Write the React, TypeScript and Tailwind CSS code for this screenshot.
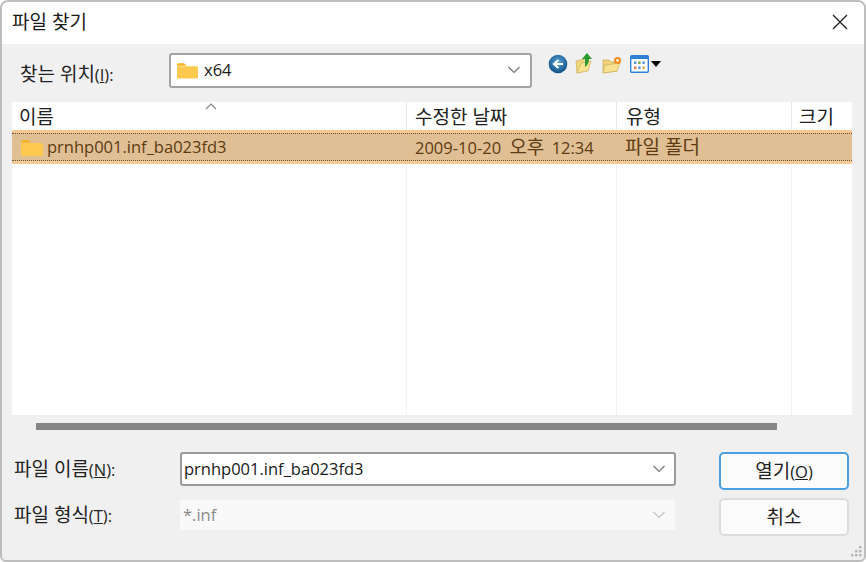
import type { ReactNode } from 'react';

const font = { fontFamily: '"Open Sans", "Noto Sans CJK KR", sans-serif' };

// Korean text runs wider than the latin around it
function K({ children }: { children: ReactNode }) {
  return <span className="text-[19px]">{children}</span>;
}

function Folder({ className }: { className?: string }) {
  return (
    <svg viewBox="0 0 22 17" className={className}>
      <path d="M0 2.5 Q0 1 1.5 1 H7.5 L10 3.5 H0 Z" fill="#f5b221" />
      <path d="M0 4 H20.5 Q22 4 22 5.5 V15.5 Q22 17 20.5 17 H1.5 Q0 17 0 15.5 Z" fill="#fdc94f" />
    </svg>
  );
}

function Chevron({ color = '#777' }: { color?: string }) {
  return (
    <svg width="14" height="8" viewBox="0 0 14 8" fill="none" stroke={color} strokeWidth="1.2">
      <path d="M1.5 1 L7 6.5 L12.5 1" />
    </svg>
  );
}

function Toolbar() {
  return (
    <div className="flex items-center ml-[16px] mt-[-18px] h-[24px]">
      {/* back */}
      <svg width="20" height="20" viewBox="0 0 20 20">
        <defs>
          <radialGradient id="bk" cx="50%" cy="40%" r="60%">
            <stop offset="0%" stopColor="#5aa7dc" />
            <stop offset="100%" stopColor="#0f4f86" />
          </radialGradient>
        </defs>
        <circle cx="10" cy="10" r="9.3" fill="url(#bk)" />
        <path d="M15 10 H7 M10.5 6 L6 10 L10.5 14" stroke="#fff" strokeWidth="2.2" fill="none" />
      </svg>
      {/* up */}
      <svg width="20" height="22" viewBox="0 0 20 22" className="ml-[7px] mt-[-2px]">
        <path d="M1 9 L9 7 L9 19 L2 21 Z" fill="#f0d67e" stroke="#c9ab55" strokeWidth="0.7" />
        <path d="M6 11 L16 9 L13 19 L2 21 Z" fill="#f6e28f" stroke="#cdb25e" strokeWidth="0.7" />
        <path d="M10 15 V7 H7 L12 1 L17 7 H14 Q14 12 10 15 Z" fill="#2c9a2a" />
      </svg>
      {/* new folder */}
      <svg width="20" height="18" viewBox="0 0 20 18" className="ml-[7px] mt-[1px]">
        <path d="M1 4 H7 L9 6 H15 V15 L1 17 Z" fill="#efd27a" stroke="#c9ab55" strokeWidth="0.7" />
        <path d="M3 9 L18 7 L15 15 L1 17 Z" fill="#f7e291" stroke="#cdb25e" strokeWidth="0.7" />
        <circle cx="15.5" cy="4.5" r="3.5" fill="#f08a24" />
        <circle cx="15.5" cy="4.5" r="1.4" fill="#fff3c4" />
      </svg>
      {/* view menu */}
      <svg width="19" height="18" viewBox="0 0 19 18" className="ml-[8px]">
        <rect x="0.7" y="0.7" width="17.6" height="16.6" rx="1" fill="#fff" stroke="#2f7fd6" strokeWidth="1.4" />
        <rect x="1" y="1" width="17" height="3" fill="#2f7fd6" />
        <rect x="4" y="6.5" width="2.4" height="2.4" fill="#4a8fe0" />
        <rect x="8.2" y="6.5" width="2.4" height="2.4" fill="#6c9e3e" />
        <rect x="12.4" y="6.5" width="2.4" height="2.4" fill="#4a8fe0" />
        <rect x="4" y="11.5" width="2.4" height="2.4" fill="#e0703a" />
        <rect x="8.2" y="11.5" width="2.4" height="2.4" fill="#4a8fe0" />
        <rect x="12.4" y="11.5" width="2.4" height="2.4" fill="#e0a83a" />
      </svg>
      <div className="ml-[2px] w-0 h-0 border-x-[5.5px] border-x-transparent border-t-[6px] border-t-black" />
    </div>
  );
}

export default function App() {
  return (
    <div
      className="w-[866px] h-[562px] bg-white overflow-hidden text-[16.5px] leading-none text-[#1a1a1a]"
      style={font}
    >
      <div className="relative w-[866px] h-[562px] flex flex-col border-2 border-[#bdbdbd] rounded-t-[8px] rounded-b-[6px] overflow-hidden bg-[#f0f0f0]">
        {/* title bar */}
        <div className="h-[42px] bg-white flex items-center justify-between pl-[10px] pr-[16px] shrink-0">
          <span className="mt-[-2px]"><K>파일 찾기</K></span>
          <svg width="16" height="16" viewBox="0 0 16 16" stroke="#222" strokeWidth="1.3" className="mt-[-3px]">
            <path d="M1 1 L15 15 M15 1 L1 15" />
          </svg>
        </div>

        {/* look in */}
        <div className="h-[58px] flex items-center shrink-0">
          <span className="ml-[18px] w-[149px] mt-[2px] text-[#222]">
            <K>찾는 위치</K>(<span className="underline">I</span>):
          </span>
          <div className="w-[363px] h-[35px] mt-[-6px] bg-white border-2 border-[#a3a3a3] rounded-[3px] flex items-center pl-[6px] pr-[9px]">
            <Folder className="w-[21px] h-[17px]" />
            <span className="ml-[6px] flex-1">x64</span>
            <Chevron />
          </div>
          <Toolbar />
        </div>

        {/* file list */}
        <div className="relative h-[313px] ml-[10px] w-[840px] bg-white flex flex-col shrink-0">
          <div className="absolute left-[193px] top-[1px]">
            <svg width="12" height="7" viewBox="0 0 12 7" fill="none" stroke="#888" strokeWidth="1.2">
              <path d="M1 6 L6 1 L11 6" />
            </svg>
          </div>
          <div className="h-[28px] grid grid-cols-[395px_210px_175px_60px] shrink-0 text-[#222]">
            <div className="pl-[7px] pt-[6px] border-r border-[#e5e5e5]"><K>이름</K></div>
            <div className="pl-[8px] pt-[6px] border-r border-[#e5e5e5]"><K>수정한 날짜</K></div>
            <div className="pl-[9px] pt-[6px] border-r border-[#e5e5e5]"><K>유형</K></div>
            <div className="pl-[7px] pt-[6px]"><K>크기</K></div>
          </div>
          <div className="h-[34px] bg-[#e0bf94] border-y-[3px] border-[#f5c896] shrink-0 text-[#5c3b12]">
            <div className="h-full grid grid-cols-[395px_210px_175px_60px] items-center border-y border-dotted border-[#6b5233]">
              <div className="flex items-center pl-[9px]">
                <Folder className="w-[22px] h-[17px]" />
                <span className="ml-[4px]">prnhp001.inf_ba023fd3</span>
              </div>
              <div className="pl-[8px]">
                2009-10-20 <span className="ml-[4px] mr-[3px]"><K>오후</K></span> 12:34
              </div>
              <div className="pl-[8px]"><K>파일 폴더</K></div>
              <div />
            </div>
          </div>
          <div className="flex-1 grid grid-cols-[395px_210px_175px_60px]">
            <div className="border-r border-[#eef3fa]" />
            <div className="border-r border-[#eef3fa]" />
            <div className="border-r border-[#eef3fa]" />
            <div />
          </div>
        </div>

        {/* horizontal scrollbar */}
        <div className="h-[7px] ml-[34px] w-[741px] mt-[8px] bg-[#858585] shrink-0" />

        {/* bottom form */}
        <div className="flex mt-[21px] shrink-0">
          <div className="flex flex-col">
            <div className="h-[35px] flex items-center">
              <span className="ml-[12px] w-[166px] text-[#222] mt-[2px]">
                <K>파일 이름</K>(<span className="underline">N</span>):
              </span>
              <div className="w-[496px] h-[34px] mt-[1px] bg-white border-2 border-[#9a9a9a] rounded-[3px] flex items-center pl-[2px] pr-[8px] justify-between">
                <span>prnhp001.inf_ba023fd3</span>
                <Chevron />
              </div>
            </div>
            <div className="h-[30px] mt-[14px] flex items-center">
              <span className="ml-[12px] w-[166px] text-[#222]">
                <K>파일 형식</K>(<span className="underline">T</span>):
              </span>
              <div className="w-[495px] h-[30px] bg-[#f9f9f9] flex items-center pl-[3px] pr-[9px] justify-between text-[#8a8a8a]">
                <span>*.inf</span>
                <Chevron color="#c4c4c4" />
              </div>
            </div>
          </div>
          <div className="flex flex-col ml-[43px] mt-[1px] gap-[8px]">
            <button className="w-[130px] h-[38px] bg-[#fbfbfb] border-2 border-[#4a9fe0] rounded-[5px] text-[#222]">
              <K>열기</K>(<span className="underline">O</span>)
            </button>
            <button className="w-[130px] h-[38px] bg-[#fbfbfb] border-2 border-[#dcdcdc] rounded-[5px] text-[#222]">
              <K>취소</K>
            </button>
          </div>
        </div>

        {/* resize grip */}
        <svg width="14" height="14" viewBox="0 0 14 14" fill="#b5b5b5" className="absolute right-[1px] bottom-[1px]">
          <rect x="10" y="1" width="2.4" height="2.4" />
          <rect x="6" y="5" width="2.4" height="2.4" />
          <rect x="10" y="5" width="2.4" height="2.4" />
          <rect x="2" y="9" width="2.4" height="2.4" />
          <rect x="6" y="9" width="2.4" height="2.4" />
          <rect x="10" y="9" width="2.4" height="2.4" />
        </svg>
      </div>
    </div>
  );
}
